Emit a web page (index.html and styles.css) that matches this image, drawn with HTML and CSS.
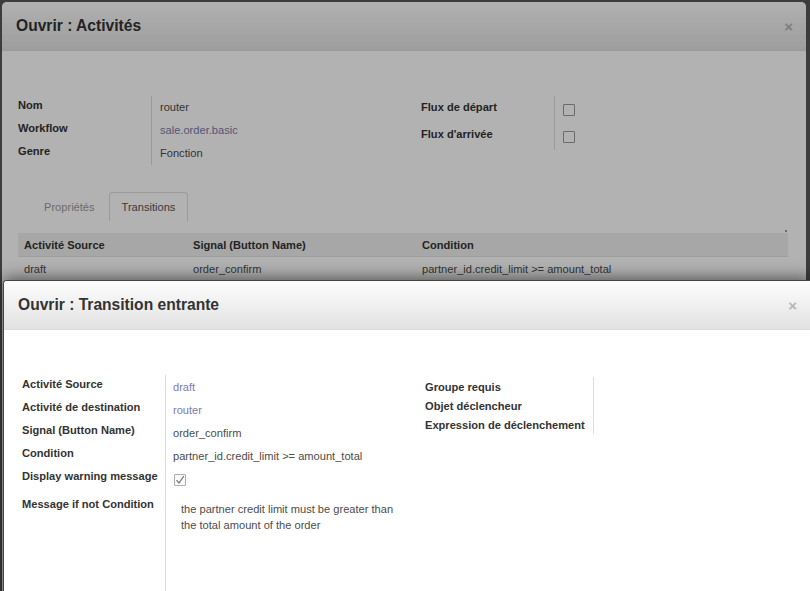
FILE: index.html
```html
<!DOCTYPE html>
<html>
<head>
<meta charset="utf-8">
<link rel="stylesheet" href="styles.css">
</head>
<body>
<div class="dialog dlg-back">
  <div class="dlg-header">
    <h3 class="dlg-title">Ouvrir : Activités</h3>
    <span class="close">×</span>
  </div>
  <div class="dlg-body back-body">
    <div class="groups">
      <div class="group">
        <div class="row r23"><div class="lbl lbl-back">Nom</div><div class="val">router</div></div>
        <div class="row r23"><div class="lbl lbl-back">Workflow</div><div class="val"><a class="link">sale.order.basic</a></div></div>
        <div class="row r23"><div class="lbl lbl-back">Genre</div><div class="val">Fonction</div></div>
      </div>
      <div class="group">
        <div class="row r27"><div class="lbl lbl-back lbl-chk">Flux de départ</div><div class="val val-chk"><span class="chk"></span></div></div>
        <div class="row r27"><div class="lbl lbl-back lbl-chk">Flux d'arrivée</div><div class="val val-chk"><span class="chk"></span></div></div>
      </div>
    </div>
    <div class="tabs">
      <span class="tab">Propriétés</span>
      <span class="tab active">Transitions</span>
      <span class="handle"></span>
    </div>
    <table class="grid">
      <thead>
        <tr><th class="c1">Activité Source</th><th class="c2">Signal (Button Name)</th><th>Condition</th></tr>
      </thead>
      <tbody>
        <tr><td>draft</td><td>order_confirm</td><td>partner_id.credit_limit &gt;= amount_total</td></tr>
        <tr><td>&nbsp;</td><td></td><td></td></tr>
      </tbody>
    </table>
  </div>
</div>

<div class="overlay"></div>

<div class="dialog dlg-front">
  <div class="dlg-header">
    <h3 class="dlg-title">Ouvrir : Transition entrante</h3>
    <span class="close">×</span>
  </div>
  <div class="dlg-body front-body">
    <div class="groups">
      <div class="group">
        <div class="row r23"><div class="lbl lbl-front">Activité Source</div><div class="val val-f"><a class="link">draft</a></div></div>
        <div class="row r23"><div class="lbl lbl-front">Activité de destination</div><div class="val val-f"><a class="link">router</a></div></div>
        <div class="row r23"><div class="lbl lbl-front">Signal (Button Name)</div><div class="val val-f">order_confirm</div></div>
        <div class="row r23"><div class="lbl lbl-front">Condition</div><div class="val val-f">partner_id.credit_limit &gt;= amount_total</div></div>
        <div class="row r24"><div class="lbl lbl-front">Display warning message</div><div class="val val-chk-f"><span class="chk checked"><svg width="10" height="10" viewBox="0 0 10 10"><path d="M1.5 5.2 L4 8 L8.8 1.2" fill="none" stroke="#777" stroke-width="1.2"/></svg></span></div></div>
        <div class="row r-msg"><div class="lbl lbl-front lbl-msg">Message if not Condition</div><div class="val val-msg"><div class="msg">the partner credit limit must be greater than the total amount of the order</div></div></div>
      </div>
      <div class="group group-r">
        <div class="row r19"><div class="lbl lbl-front2">Groupe requis</div><div class="val"></div></div>
        <div class="row r19"><div class="lbl lbl-front2">Objet déclencheur</div><div class="val"></div></div>
        <div class="row r19"><div class="lbl lbl-front2">Expression de déclenchement</div><div class="val"></div></div>
      </div>
    </div>
  </div>
</div>
</body>
</html>
```

FILE: styles.css
```css
html, body {
  margin: 0;
  padding: 0;
}
body {
  background: #565656;
  width: 810px;
  height: 591px;
  overflow: hidden;
  position: relative;
  font-family: "Liberation Sans", Arial, sans-serif;
  font-size: 11.1px;
  color: #4c4c4c;
}
.dialog {
  background: #fff;
  border-radius: 5px 5px 0 0;
  overflow: hidden;
}
.dlg-back {
  margin: 2px 0 0 2px;
  width: 804px;
  height: 600px;
}
.dlg-header {
  height: 48px;
  border-bottom: 1px solid #dcdcdc;
  background: linear-gradient(#fdfdfd, #e2e2e2);
  display: flex;
  align-items: center;
  justify-content: space-between;
  padding: 0 14px;
}
.dlg-title {
  margin: 0;
  font-size: 15.6px;
  font-weight: bold;
  color: #333;
}
.close {
  font-size: 15px;
  font-weight: bold;
  color: #b5b5b5;
  margin-right: -1px;
}
.back-body {
  padding: 45px 16px 0 16px;
}
.groups {
  display: flex;
}
.group {
  width: 403px;
  flex: none;
}
.row {
  display: flex;
}
.r23 { height: 23px; }
.r24 { height: 24px; }
.r27 { height: 27px; }
.r19 { height: 19px; }
.lbl {
  font-weight: bold;
  color: #333;
  line-height: 14px;
  padding-top: 2px;
  flex: none;
}
.lbl-back { width: 133px; }
.lbl-chk { padding-top: 4px; }
.lbl-front { width: 143px; }
.lbl-front2 { width: 168px; padding-top: 3px; }
.lbl-msg { padding-top: 6px; }
.val {
  border-left: 1px solid #ddd;
  padding-left: 8px;
  line-height: 14px;
  padding-top: 4px;
  flex: 1;
}
.val-f { padding-top: 5px; padding-left: 7px; }
.val-chk { padding-top: 8px; }
.val-chk-f { padding-top: 7px; padding-left: 8px; }
.link {
  color: #7c7bad;
  text-decoration: none;
}
.chk {
  display: block;
  width: 10px;
  height: 10px;
  border: 1px solid #9a9a9a;
  border-radius: 1px;
  background: #fff;
}
.chk.checked {
  border-color: #b0b0b0;
  background: #fafafa;
}
.chk svg { display: block; }

.tabs {
  display: flex;
  align-items: stretch;
  height: 29px;
  margin: 27px 0 0 13px;
  position: relative;
  width: 759px;
}
.tab {
  padding: 0 12px;
  line-height: 28px;
  color: #9a9a9a;
  border: 1px solid transparent;
  border-bottom: none;
  border-radius: 4px 4px 0 0;
}
.tab.active {
  color: #555;
  border-color: #ddd;
  margin-left: 1px;
}
.handle {
  position: absolute;
  right: 3px;
  bottom: -11px;
  width: 2px;
  height: 2px;
  background: #999;
}
.grid {
  margin-top: 12px;
  width: 770px;
  border-collapse: collapse;
}
.grid th {
  background: #efefef;
  text-align: left;
  font-weight: bold;
  color: #333;
  height: 23px;
  padding: 0 6px;
  border-bottom: 1px solid #e2e2e2;
}
.grid td {
  height: 23px;
  padding: 0 6px;
  color: #4c4c4c;
}
.grid .c1 { width: 157px; }
.grid .c2 { width: 217px; }

.overlay {
  position: absolute;
  left: 0;
  top: 0;
  right: 0;
  bottom: 0;
  background: rgba(0, 0, 0, 0.3);
}
.dlg-front {
  position: absolute;
  left: 3px;
  top: 280px;
  width: 808px;
  height: 330px;
  border-top: 1px solid #444;
  border-left: 1px solid #444;
  border-radius: 4px 0 0 0;
  box-shadow: 0 -2px 16px rgba(0, 0, 0, 0.55);
}
.dlg-front .close {
  margin-right: 1px;
}
.front-body {
  padding: 45px 18px 0 18px;
}
.group-r {
  margin-top: 2px;
}
.group-r .val { padding-top: 0; }
.r-msg { height: 220px; }
.val-msg { padding-top: 10px; }
.msg {
  padding-left: 7px;
  width: 226px;
  line-height: 16px;
  color: #4c4c4c;
}
```
